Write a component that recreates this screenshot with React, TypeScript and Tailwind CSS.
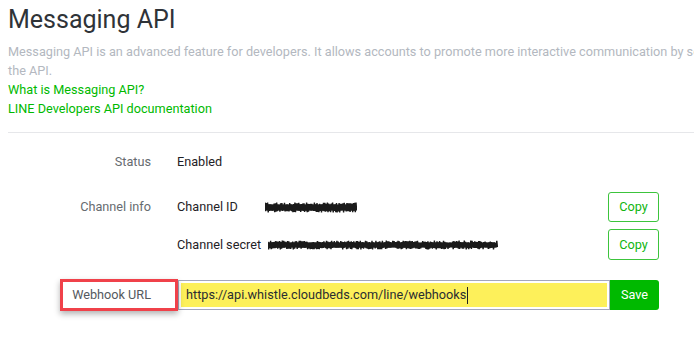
import React from 'react';

// redaction scribble: dense zigzag strokes, drawn as svg
function Scribble({ width, height }: { width: number; height: number }) {
  const pts: string[] = [];
  let seed = width * 7 + 3;
  const rnd = () => {
    seed = (seed * 9301 + 49297) % 233280;
    return seed / 233280;
  };
  for (let x = 0; x <= width; x += 1.3) {
    const top = 0.5 + rnd() * 2.5;
    const bottom = height - 0.5 - rnd() * 2.5;
    pts.push(`${x.toFixed(1)},${top.toFixed(1)}`);
    pts.push(`${(x + 0.6).toFixed(1)},${bottom.toFixed(1)}`);
  }
  return (
    <svg width={width} height={height} viewBox={`0 0 ${width} ${height}`} className="block">
      <rect x="1" y="2.5" width={width - 2} height={height - 5} fill="#111" rx="2" />
      <polyline points={pts.join(' ')} fill="none" stroke="#1a1a1a" strokeWidth="1.4" />
    </svg>
  );
}

export default function App() {
  return (
    <div className="relative w-[694px] h-[343px] overflow-hidden bg-white font-['Roboto',sans-serif] text-[12.7px]">
      <div className="pl-[8px]">
        <h1 className="pt-[5px] text-[25px] leading-[30px] text-[#2f3338]">Messaging API</h1>
        <p className="mt-[7px] leading-[19px] text-[#b3b8c0] whitespace-nowrap">
          Messaging API is an advanced feature for developers. It allows accounts to promote more interactive communication by sending messages via
          <br />
          the API.
        </p>
        <a href="#" className="block leading-[19px] text-[#00b900]">What is Messaging API?</a>
        <a href="#" className="block leading-[19px] text-[#00b900]">LINE Developers API documentation</a>
        <div className="mt-[14px] border-t border-[#e6e7ea]" />

        {/* Settings rows */}
        <div className="grid grid-cols-[143px_482px] gap-x-[26px] items-center">
          <div className="mt-[19px] h-[20px] flex items-center justify-end text-[#666b70]">Status</div>
          <div className="mt-[19px] h-[20px] flex items-center text-[#1f2226]">Enabled</div>

          <div className="mt-[20px] h-[30px] self-start flex items-center justify-end text-[#666b70]">Channel info</div>
          <div className="mt-[20px] flex flex-col gap-[7px]">
            <div className="flex items-center h-[30px] text-[#1f2226]">
              <span className="w-[88px]">Channel ID</span>
              <Scribble width={92} height={11} />
              <button className="ml-auto w-[51px] h-[30px] rounded-[3px] border border-[#3cc43c] text-[#11b511]">Copy</button>
            </div>
            <div className="flex items-center h-[31px] text-[#1f2226]">
              <span className="w-[91px]">Channel secret</span>
              <Scribble width={230} height={10} />
              <button className="ml-auto w-[51px] h-[31px] rounded-[3px] border border-[#3cc43c] text-[#11b511]">Copy</button>
            </div>
          </div>

          <div className="mt-[20px] h-[30px] flex items-center justify-end text-[#55595e]">Webhook URL</div>
          <div className="mt-[20px] flex items-center h-[30px]">
            <div className="ml-[1px] w-[432px] h-[30px] border border-[#a4a7bb] p-[2px]">
              <div className="h-full bg-[#fdf05a] flex items-center pl-[5px] text-[#2a2d31]">
                https://api.whistle.cloudbeds.com/line/webhooks
                <span className="ml-[1px] w-[1px] h-[17px] bg-[#222]" />
              </div>
            </div>
            <button className="w-[49px] h-[30px] bg-[#00b900] text-white rounded-r-[3px]">Save</button>
          </div>
        </div>
      </div>

      {/* red annotation box over the Webhook URL label */}
      <div className="absolute left-[60px] top-[279px] w-[118px] h-[32px] border-[3px] border-[#f0414a] shadow-[0_3px_6px_rgba(0,0,0,0.3)]" />
    </div>
  );
}
